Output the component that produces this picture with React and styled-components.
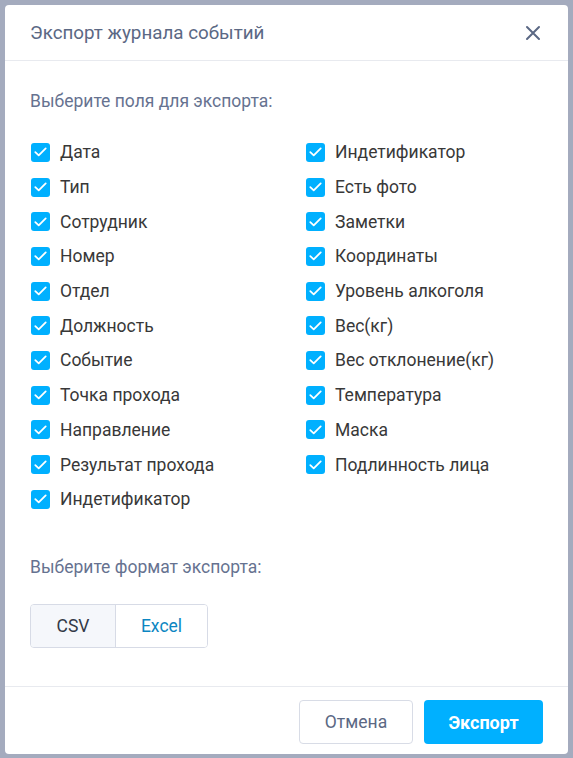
import React, { useState } from 'react';
import styled, { createGlobalStyle } from 'styled-components';

const GlobalStyle = createGlobalStyle`
  html, body {
    margin: 0;
    padding: 0;
    background: #a4abbe;
    font-family: Roboto, "Noto Sans", sans-serif;
  }
`;

const Backdrop = styled.div`
  width: 573px;
  height: 758px;
  padding: 5px;
  box-sizing: border-box;
  background: #a4abbe;
`;

const Modal = styled.div`
  width: 563px;
  height: 749px;
  background: #fff;
  border-radius: 4px;
  display: flex;
  flex-direction: column;
  box-sizing: border-box;
`;

const Header = styled.header`
  height: 56px;
  padding: 1px 26px 0 25px;
  display: flex;
  align-items: center;
  justify-content: space-between;
  border-bottom: 1px solid #e8eaef;
  box-sizing: border-box;
`;

const Title = styled.h2`
  margin: 0;
  font-size: 18.8px;
  font-weight: 400;
  color: #5b6884;
`;

const CloseButton = styled.button`
  border: 0;
  background: none;
  padding: 0;
  width: 18px;
  height: 18px;
  display: flex;
  align-items: center;
  justify-content: center;
  cursor: pointer;
`;

const Body = styled.div`
  flex: 1;
  padding: 30px 25px 0;
`;

const SectionLabel = styled.div`
  font-size: 17.5px;
  line-height: 20px;
  color: #667290;
  margin-bottom: ${p => p.gap}px;
`;

const FieldGrid = styled.div`
  display: grid;
  grid-template-columns: 275px 275px;
  grid-auto-flow: column;
  grid-template-rows: repeat(11, 34.7px);
  margin-bottom: 40px;
`;

const Field = styled.label`
  display: flex;
  align-items: center;
  gap: 10px;
  font-size: 17.5px;
  color: #383838;
  cursor: pointer;
`;

const Box = styled.span`
  width: 19px;
  height: 19px;
  border-radius: 3px;
  background: ${p => (p.checked ? '#00b0ff' : '#fff')};
  border: ${p => (p.checked ? 'none' : '1px solid #c9ced9')};
  display: flex;
  align-items: center;
  justify-content: center;
  margin-left: 1px;
  box-sizing: border-box;
`;

const Segmented = styled.div`
  display: inline-flex;
  border: 1px solid #d7dbe6;
  border-radius: 4px;
  overflow: hidden;
  height: 44px;
  box-sizing: border-box;
`;

const Segment = styled.button`
  border: 0;
  border-left: ${p => (p.first ? 'none' : '1px solid #d7dbe6')};
  background: ${p => (p.active ? '#f5f7fb' : '#fff')};
  color: ${p => (p.active ? '#333a47' : '#0b86c2')};
  font-family: inherit;
  font-size: 17.5px;
  width: ${p => p.w}px;
  cursor: pointer;
`;

const Footer = styled.footer`
  border-top: 1px solid #e8eaef;
  padding: 13px 25px 10px;
  display: flex;
  justify-content: flex-end;
  gap: 11px;
`;

const Button = styled.button`
  height: 44px;
  width: ${p => p.w}px;
  border-radius: 4px;
  font-family: inherit;
  font-size: ${p => (p.primary ? 18 : 17.5)}px;
  cursor: pointer;
  border: ${p => (p.primary ? 'none' : '1px solid #d8dce6')};
  background: ${p => (p.primary ? '#00b0ff' : '#fff')};
  color: ${p => (p.primary ? '#fff' : '#5b6884')};
  font-weight: ${p => (p.primary ? 700 : 400)};
`;

const fields = [
  'Дата', 'Тип', 'Сотрудник', 'Номер', 'Отдел', 'Должность', 'Событие',
  'Точка прохода', 'Направление', 'Результат прохода', 'Индетификатор',
  'Индетификатор', 'Есть фото', 'Заметки', 'Координаты', 'Уровень алкоголя',
  'Вес(кг)', 'Вес отклонение(кг)', 'Температура', 'Маска', 'Подлинность лица',
];

const Check = () => (
  <svg width="13" height="10" viewBox="0 0 13 10" fill="none">
    <path d="M1.3 5.2 L4.7 8.4 L11.7 1.4" stroke="#fff" strokeWidth="1.8" strokeLinecap="round" strokeLinejoin="round" />
  </svg>
);

export default function App() {
  const [checked, setChecked] = useState(fields.map(() => true));
  const [format, setFormat] = useState('csv');

  const toggle = i => setChecked(c => c.map((v, j) => (j === i ? !v : v)));

  return (
    <>
      <GlobalStyle />
      <Backdrop>
        <Modal>
          <Header>
            <Title>Экспорт журнала событий</Title>
            <CloseButton aria-label="close">
              <svg width="16" height="16" viewBox="0 0 16 16">
                <path d="M2 2 L14 14 M14 2 L2 14" stroke="#5b6884" strokeWidth="2" strokeLinecap="round" />
              </svg>
            </CloseButton>
          </Header>
          <Body>
            <SectionLabel gap={24}>Выберите поля для экспорта:</SectionLabel>
            <FieldGrid>
              {fields.map((f, i) => (
                <Field key={i} onClick={() => toggle(i)}>
                  <Box checked={checked[i]}>{checked[i] && <Check />}</Box>
                  {f}
                </Field>
              ))}
            </FieldGrid>
            <SectionLabel gap={27}>Выберите формат экспорта:</SectionLabel>
            <Segmented>
              <Segment first w={84} active={format === 'csv'} onClick={() => setFormat('csv')}>CSV</Segment>
              <Segment w={92} active={format === 'excel'} onClick={() => setFormat('excel')}>Excel</Segment>
            </Segmented>
          </Body>
          <Footer>
            <Button w={114}>Отмена</Button>
            <Button primary w={119}>Экспорт</Button>
          </Footer>
        </Modal>
      </Backdrop>
    </>
  );
}
